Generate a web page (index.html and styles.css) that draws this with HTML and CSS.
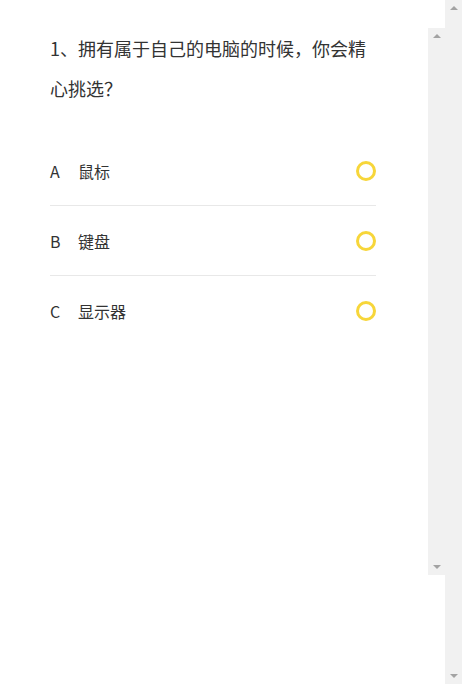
FILE: index.html
```html
<!DOCTYPE html>
<html lang="zh-CN">
<head>
<meta charset="utf-8">
<title>问卷</title>
<link rel="stylesheet" href="styles.css">
</head>
<body>
<div class="window">
  <div class="viewport">
    <div class="panel">
      <div class="quiz">
        <p class="question">1、拥有属于自己的电脑的时候，你会精心挑选？</p>
        <ul class="options">
          <li class="option"><span class="letter">A</span><span class="label">鼠标</span><span class="radio"></span></li>
          <li class="option"><span class="letter">B</span><span class="label">键盘</span><span class="radio"></span></li>
          <li class="option"><span class="letter">C</span><span class="label">显示器</span><span class="radio"></span></li>
        </ul>
      </div>
      <div class="vbar">
        <span class="arrow-btn"><span class="arrow up"></span></span>
        <span class="arrow-btn"><span class="arrow down"></span></span>
      </div>
    </div>
  </div>
  <div class="vbar">
    <span class="arrow-btn"><span class="arrow up"></span></span>
    <span class="arrow-btn"><span class="arrow down"></span></span>
  </div>
</div>
</body>
</html>
```

FILE: styles.css
```css
html, body {
  margin: 0;
  background: #fff;
}
body {
  font-family: "Microsoft YaHei", "Noto Sans CJK SC", sans-serif;
  color: #333;
  overflow: hidden;
}
.window {
  display: flex;
  height: 684px;
}
.viewport {
  flex: 1;
  padding-top: 28px;
}
.panel {
  display: flex;
  height: 547px;
}
.quiz {
  flex: 1;
  padding-left: 50px;
  padding-right: 52px;
}
.vbar {
  width: 17px;
  flex: none;
  background: #f1f1f1;
  display: flex;
  flex-direction: column;
  justify-content: space-between;
}
.arrow-btn {
  display: flex;
  align-items: center;
  justify-content: center;
  height: 17px;
}
.arrow {
  width: 0;
  height: 0;
  border-left: 4px solid transparent;
  border-right: 4px solid transparent;
}
.arrow.up {
  border-bottom: 4px solid #a3a3a3;
  margin-top: -2px;
}
.arrow.down {
  border-top: 4px solid #a3a3a3;
  margin-top: 1px;
}
.question {
  margin: 0;
  font-size: 18px;
  line-height: 40px;
  color: #333;
}
.options {
  list-style: none;
  margin: 28px 0 0;
  padding: 0;
}
.option {
  display: flex;
  align-items: center;
  height: 69px;
  border-bottom: 1px solid #e8e8e8;
  font-size: 16px;
}
.option:last-child {
  border-bottom: none;
}
.letter {
  width: 28px;
}
.label {
  flex: 1;
}
.radio {
  width: 14px;
  height: 14px;
  border: 3px solid #f7d63a;
  border-radius: 50%;
}
```
